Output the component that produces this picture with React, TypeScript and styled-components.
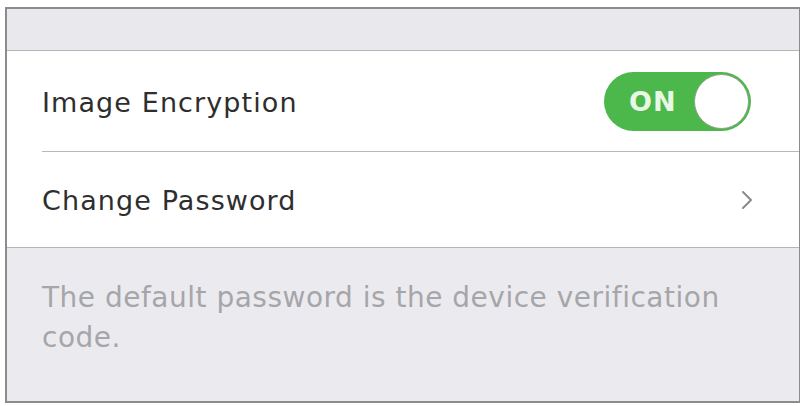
import React, { FC } from "react";
import styled, { createGlobalStyle } from "styled-components";

const GlobalStyle = createGlobalStyle`
  html, body {
    margin: 0;
    padding: 0;
    background: #fff;
  }
  body {
    font-family: "DejaVu Sans", "Open Sans", sans-serif;
  }
`;

const Styled = {
  Frame: styled.div`
    box-sizing: border-box;
    width: 795px;
    height: 396px;
    margin: 7px 0 0 5px;
    border: 2px solid #8c8c8c;
    border-right-width: 1px;
    background: #ebebef;
    display: flex;
    flex-direction: column;
  `,
  Header: styled.div`
    height: 41px;
    background: #e9e9ed;
    border-bottom: 1px solid #b4b4b8;
  `,
  Group: styled.ul`
    list-style: none;
    margin: 0;
    padding: 0;
    background: #fff;
    border-bottom: 1px solid #b4b4b8;
  `,
  Row: styled.li<{ $height: number; $divider?: boolean }>`
    position: relative;
    height: ${(p) => p.$height}px;
    display: flex;
    align-items: center;
    justify-content: space-between;
    padding: 0 38px 0 35px;

    ${(p) =>
      p.$divider &&
      `
      &::after {
        content: "";
        position: absolute;
        left: 35px;
        right: 0;
        bottom: 0;
        height: 1px;
        background: #b8b8bc;
      }
    `}
  `,
  Label: styled.span`
    font-size: 27px;
    color: #2e2e2e;
    letter-spacing: 1.1px;
    padding-top: 2px;
  `,
  Toggle: styled.div`
    box-sizing: border-box;
    width: 147px;
    height: 59px;
    border-radius: 30px;
    background: #4cb84c;
    display: flex;
    align-items: center;
    justify-content: space-between;
    padding: 0 2px 0 25px;
    margin-right: 10px;
  `,
  ToggleText: styled.span`
    color: #e8f8e4;
    font-size: 27px;
    font-weight: 700;
    letter-spacing: 1px;
  `,
  Knob: styled.span`
    box-sizing: border-box;
    width: 55px;
    height: 55px;
    border-radius: 50%;
    background: #fff;
    border: 1.5px solid #8fa08c;
  `,
  Chevron: styled.svg`
    width: 14px;
    height: 22px;
    margin-right: 7px;
  `,
  Note: styled.p`
    margin: 0;
    padding: 30px 50px 0 35px;
    font-size: 28px;
    line-height: 40px;
    letter-spacing: 0.5px;
    color: #a6a6aa;
  `,
};

const App: FC = () => {
  return (
    <>
      <GlobalStyle />
      <Styled.Frame>
        <Styled.Header />
        <Styled.Group>
          <Styled.Row $height={101} $divider>
            <Styled.Label>Image Encryption</Styled.Label>
            <Styled.Toggle>
              <Styled.ToggleText>ON</Styled.ToggleText>
              <Styled.Knob />
            </Styled.Toggle>
          </Styled.Row>
          <Styled.Row $height={95}>
            <Styled.Label>Change Password</Styled.Label>
            <Styled.Chevron viewBox="0 0 14 22">
              <path
                d="M3 3 L11 11 L3 19"
                fill="none"
                stroke="#8a8a8e"
                strokeWidth="2"
                strokeLinecap="round"
                strokeLinejoin="round"
              />
            </Styled.Chevron>
          </Styled.Row>
        </Styled.Group>
        <Styled.Note>
          The default password is the device verification code.
        </Styled.Note>
      </Styled.Frame>
    </>
  );
};

export default App;
